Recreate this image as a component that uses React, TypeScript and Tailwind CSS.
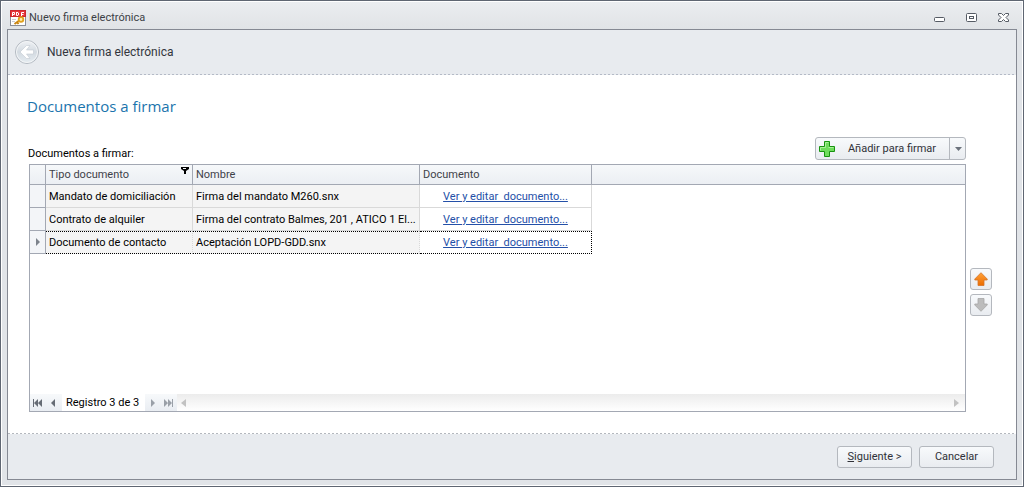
import type { ReactNode } from 'react';

const rows = [
  { type: 'Mandato de domiciliación', name: 'Firma del mandato M260.snx' },
  { type: 'Contrato de alquiler', name: 'Firma del contrato Balmes, 201 , ATICO 1 El...' },
  { type: 'Documento de contacto', name: 'Aceptación LOPD-GDD.snx' },
];
const current = 2;

const button =
  'rounded-[3px] border border-[#b4b8be] bg-linear-to-b from-[#f8fafc] to-[#e9ecf0] text-[#2f3138]';

function PdfIcon() {
  return (
    <svg width="16" height="16" viewBox="0 0 16 16" aria-hidden="true">
      <rect x="0.5" y="0.5" width="15" height="15" fill="#fff" stroke="#8a8e96" />
      <rect x="0.5" y="0.5" width="15" height="6" fill="#e8343a" stroke="#c9282e" />
      <path d="M2.5 6V2.5h2v2h-2M6.5 2v3.500h1.5l.5-.5v-2l-.5-.5H6.500M11.500 6V2.500h2.500M11.500 4.500h2" fill="none" stroke="#fff" />
      <path d="M2 9.500h4M2 11.500h3" stroke="#c8ccd2" />
      <path d="M4.500 14L10 10M7 12l1.500 2" stroke="#c98512" strokeWidth="2" />
      <circle cx="11" cy="9.500" r="2.300" fill="#fff0a8" stroke="#e0a01c" strokeWidth="1.800" />
    </svg>
  );
}

function BackIcon() {
  return (
    <svg width="26" height="26" viewBox="0 0 26 26" aria-hidden="true">
      <defs>
        <linearGradient id="disc" x1="0" y1="0" x2="0" y2="1">
          <stop offset="0" stopColor="#f0f2f5" />
          <stop offset="0.5" stopColor="#d3dae1" />
          <stop offset="1" stopColor="#e6edf2" />
        </linearGradient>
      </defs>
      <circle cx="13" cy="13" r="11.500" fill="url(#disc)" stroke="#b3b9c1" />
      <circle cx="13" cy="13" r="10.500" fill="none" stroke="#f3f5f7" />
      <path d="M6 13l6.500-6.500H16L12.500 11H19.500v4h-7l3.500 4.500h-3.500z" fill="#fff" stroke="#c3cad2" strokeWidth="0.600" />
    </svg>
  );
}

function PlusIcon() {
  return (
    <svg width="16" height="16" viewBox="0 0 16 16" aria-hidden="true">
      <path d="M5.500 0.500h5v5h5v5h-5v5h-5v-5h-5v-5h5z" fill="#6fdc5c" stroke="#17930f" strokeLinejoin="round" />
      <path d="M6.500 6.500v-5h3M1.500 9.500v-3h5M9.500 6.500h5" fill="none" stroke="#a9f09a" />
    </svg>
  );
}

function MoveIcon({ down }: { down?: boolean }) {
  return (
    <svg width="14" height="14" viewBox="0 0 14 14" aria-hidden="true" className={down ? 'rotate-180' : ''}>
      <defs>
        <linearGradient id="orange" x1="0" y1="0" x2="0" y2="1">
          <stop offset="0" stopColor="#ffa23a" />
          <stop offset="1" stopColor="#ec6c00" />
        </linearGradient>
      </defs>
      <path
        d="M7 0.700L13.200 7v1H10v5.500H4V8H0.800V7z"
        fill={down ? '#bcbcbc' : 'url(#orange)'}
        stroke={down ? '#a6a6a6' : '#d4752a'}
        strokeLinejoin="round"
        strokeWidth="0.800"
      />
    </svg>
  );
}

function Glyph({ d, color = '#9aa0a8', w = 10 }: { d: string; color?: string; w?: number }) {
  return (
    <svg width={w} height="8" viewBox={`0 0 ${w} 8`} fill={color} fillRule="evenodd" aria-hidden="true">
      <path d={d} />
    </svg>
  );
}

function NavButton({ label, children, disabled }: { label: string; children: ReactNode; disabled?: boolean }) {
  return (
    <button
      aria-label={label}
      disabled={disabled}
      className="flex w-4 items-center justify-center bg-linear-to-b from-[#f7f9fb] to-[#e9edf2]"
    >
      {children}
    </button>
  );
}

export default function App() {
  return (
    <div className="flex min-h-screen flex-col border border-[#5f6672] bg-[#e1e4e8] font-['Roboto',sans-serif] text-[11px] text-black">
      <div className="flex grow flex-col border border-white bg-linear-to-b from-[#ebedf0] to-[#e0e3e6] bg-[length:100%_28px] bg-no-repeat px-[5px] pb-[5px]">
        <header className="flex h-[27px] items-center pt-1 pr-[7px] pl-[3px]">
          <PdfIcon />
          <h1 className="ml-[3px] pt-0.5 text-[11px] text-[#3c3f46]">Nuevo firma electrónica</h1>
          <div className="ml-auto flex gap-5">
            <button aria-label="Minimizar">
              <svg width="12" height="10" viewBox="0 0 12 10" fill="#fff" stroke="#555b64">
                <rect x="0.500" y="4.500" width="10" height="4" rx="1" />
              </svg>
            </button>
            <button aria-label="Maximizar">
              <svg width="12" height="10" viewBox="0 0 12 10" fill="#fff" stroke="#555b64">
                <rect x="0.500" y="0.500" width="10" height="8" rx="1" />
                <rect x="3.500" y="3.500" width="4" height="2" />
              </svg>
            </button>
            <button aria-label="Cerrar">
              <svg width="12" height="10" viewBox="0 0 12 10" fill="#fff" stroke="#555b64">
                <path d="M0.500 0.500h3l2 2 2-2h3v1.500l-2.500 2.500 2.500 2.500v1.500h-3l-2-2-2 2h-3V7L3 4.500.5 2z" />
              </svg>
            </button>
          </div>
        </header>

        <div className="flex grow flex-col border border-[#858993] bg-white">
          <div className="flex h-11 items-center gap-[7px] bg-[#e8ebef] pl-[6px]">
            <button aria-label="Atrás">
              <BackIcon />
            </button>
            <h2 className="text-[12px] text-[#33363d]">Nueva firma electrónica</h2>
          </div>
          <div className="h-px bg-[repeating-linear-gradient(90deg,#b4bac6_0_2px,#e8ebef_2px_4px)]" />

          <main className="flex grow flex-col pr-6 pb-[21px] pl-[19px]">
            <h3 className="mt-[21px] font-['Open_Sans',sans-serif] text-[15px] leading-5 text-[#1a74ad]">Documentos a firmar</h3>
            <div className="mt-[21px] mr-[26px] flex h-[27px] items-start justify-between pl-px">
              <span className="pt-[9px] leading-4">Documentos a firmar:</span>
              <div className={`flex h-[23px] ${button}`}>
                <button className="flex w-[133px] items-center pl-[3px]">
                  <PlusIcon />
                  <span className="grow pt-0.5 text-center">Añadir para firmar</span>
                </button>
                <button aria-label="Más opciones" className="flex w-4 items-center justify-center border-l border-[#b4b8be]">
                  <Glyph d="M2 2h7L5.500 6z" color="#6b727c" />
                </button>
              </div>
            </div>

            <div className="flex grow gap-1">
              <div className="ml-[2px] flex min-w-0 grow flex-col border border-[#a3a8b3]">
                <table className="w-full table-fixed border-separate border-spacing-0 text-left">
                  <colgroup>
                    <col className="w-4" />
                    <col className="w-[147px]" />
                    <col className="w-[227px]" />
                    <col className="w-[172px]" />
                    <col />
                  </colgroup>
                  <thead>
                    <tr className="h-5 bg-linear-to-b from-[#f6f8fa] to-[#ebeef3] text-[#3f4249] *:border-b *:border-[#a3a8b3] *:font-normal">
                      <th className="border-r" />
                      <th className="border-r p-0 px-[3px] pt-0.5">
                        <span className="flex items-start justify-between">
                          Tipo documento
                          <Glyph d="M0 0h8v2L5 4v3H3V4L0 2zM2 1v1h3V1z" color="#000" w={8} />
                        </span>
                      </th>
                      <th className="border-r p-0 px-[3px] pt-0.5">Nombre</th>
                      <th className="border-r p-0 px-[3px] pt-0.5">Documento</th>
                      <th />
                    </tr>
                  </thead>
                  <tbody>
                    {rows.map((row, i) => {
                      const line = i === current ? 'border-y border-y-black border-dotted' : 'border-b border-b-[#d9d9d9]';
                      return (
                        <tr key={row.type} className="h-[23px]">
                          <td className="border-r border-b border-[#a3a8b3] bg-[#f3f5f8] p-0">
                            {i === current && (
                              <span className="flex justify-center">
                                <Glyph d="M3 0v8l4-4z" color="#7d838c" />
                              </span>
                            )}
                          </td>
                          <td className={`${line} border-r border-r-[#d9d9d9] bg-[#f4f4f4] p-0 pt-0.5 pl-[3px]`}>{row.type}</td>
                          <td className={`${line} truncate border-r border-r-[#d9d9d9] bg-[#f4f4f4] p-0 px-[3px] pt-0.5`}>{row.name}</td>
                          <td
                            className={`${line} border-r p-0 pt-0.5 text-center whitespace-pre ${i === current ? 'border-r-black' : 'border-r-[#d9d9d9]'}`}
                          >
                            <a href="#documento" className="text-[#2450a8] underline">
                              {'Ver y editar  documento...'}
                            </a>
                          </td>
                          <td />
                        </tr>
                      );
                    })}
                  </tbody>
                </table>

                <div className="mt-auto flex h-[17px] bg-linear-to-b from-[#ececec] to-white">
                  <NavButton label="Primero">
                    <Glyph d="M0 0h1v8H0zM5 0v8L1 4zM9 0v8L5 4z" color="#666c75" />
                  </NavButton>
                  <NavButton label="Anterior">
                    <Glyph d="M6 0v8L2 4z" color="#666c75" />
                  </NavButton>
                  <span className="min-w-[83px] bg-white px-1 leading-[18px]">Registro 3 de 3</span>
                  <NavButton label="Siguiente registro" disabled>
                    <Glyph d="M3 0v8l4-4z" />
                  </NavButton>
                  <NavButton label="Último" disabled>
                    <Glyph d="M0 0v8l4-4zM4 0v8l4-4zM8 0h1v8H8z" />
                  </NavButton>
                  <div className="flex grow items-center justify-between px-1">
                    <Glyph d="M5 0v8L0 4z" color="#c2c2c2" />
                    <Glyph d="M3 0v8l5-4z" color="#c2c2c2" />
                  </div>
                </div>
              </div>

              <div className="flex flex-col justify-center gap-1 pt-2">
                <button aria-label="Subir" className={`flex size-[22px] items-center justify-center ${button}`}>
                  <MoveIcon />
                </button>
                <button aria-label="Bajar" disabled className={`flex size-[22px] items-center justify-center ${button}`}>
                  <MoveIcon down />
                </button>
              </div>
            </div>
          </main>

          <div className="h-px bg-[repeating-linear-gradient(90deg,#b4b8be_0_2px,#fff_2px_4px)]" />
          <footer className="flex h-[45px] items-center justify-end gap-[7px] bg-[#e8ebef] pr-[22px]">
            <button className={`h-[22px] w-[75px] pt-0.5 ${button}`}>
              <span className="underline">S</span>iguiente &gt;
            </button>
            <button className={`h-[22px] w-[75px] pt-0.5 ${button}`}>Cancelar</button>
          </footer>
        </div>
      </div>
    </div>
  );
}
